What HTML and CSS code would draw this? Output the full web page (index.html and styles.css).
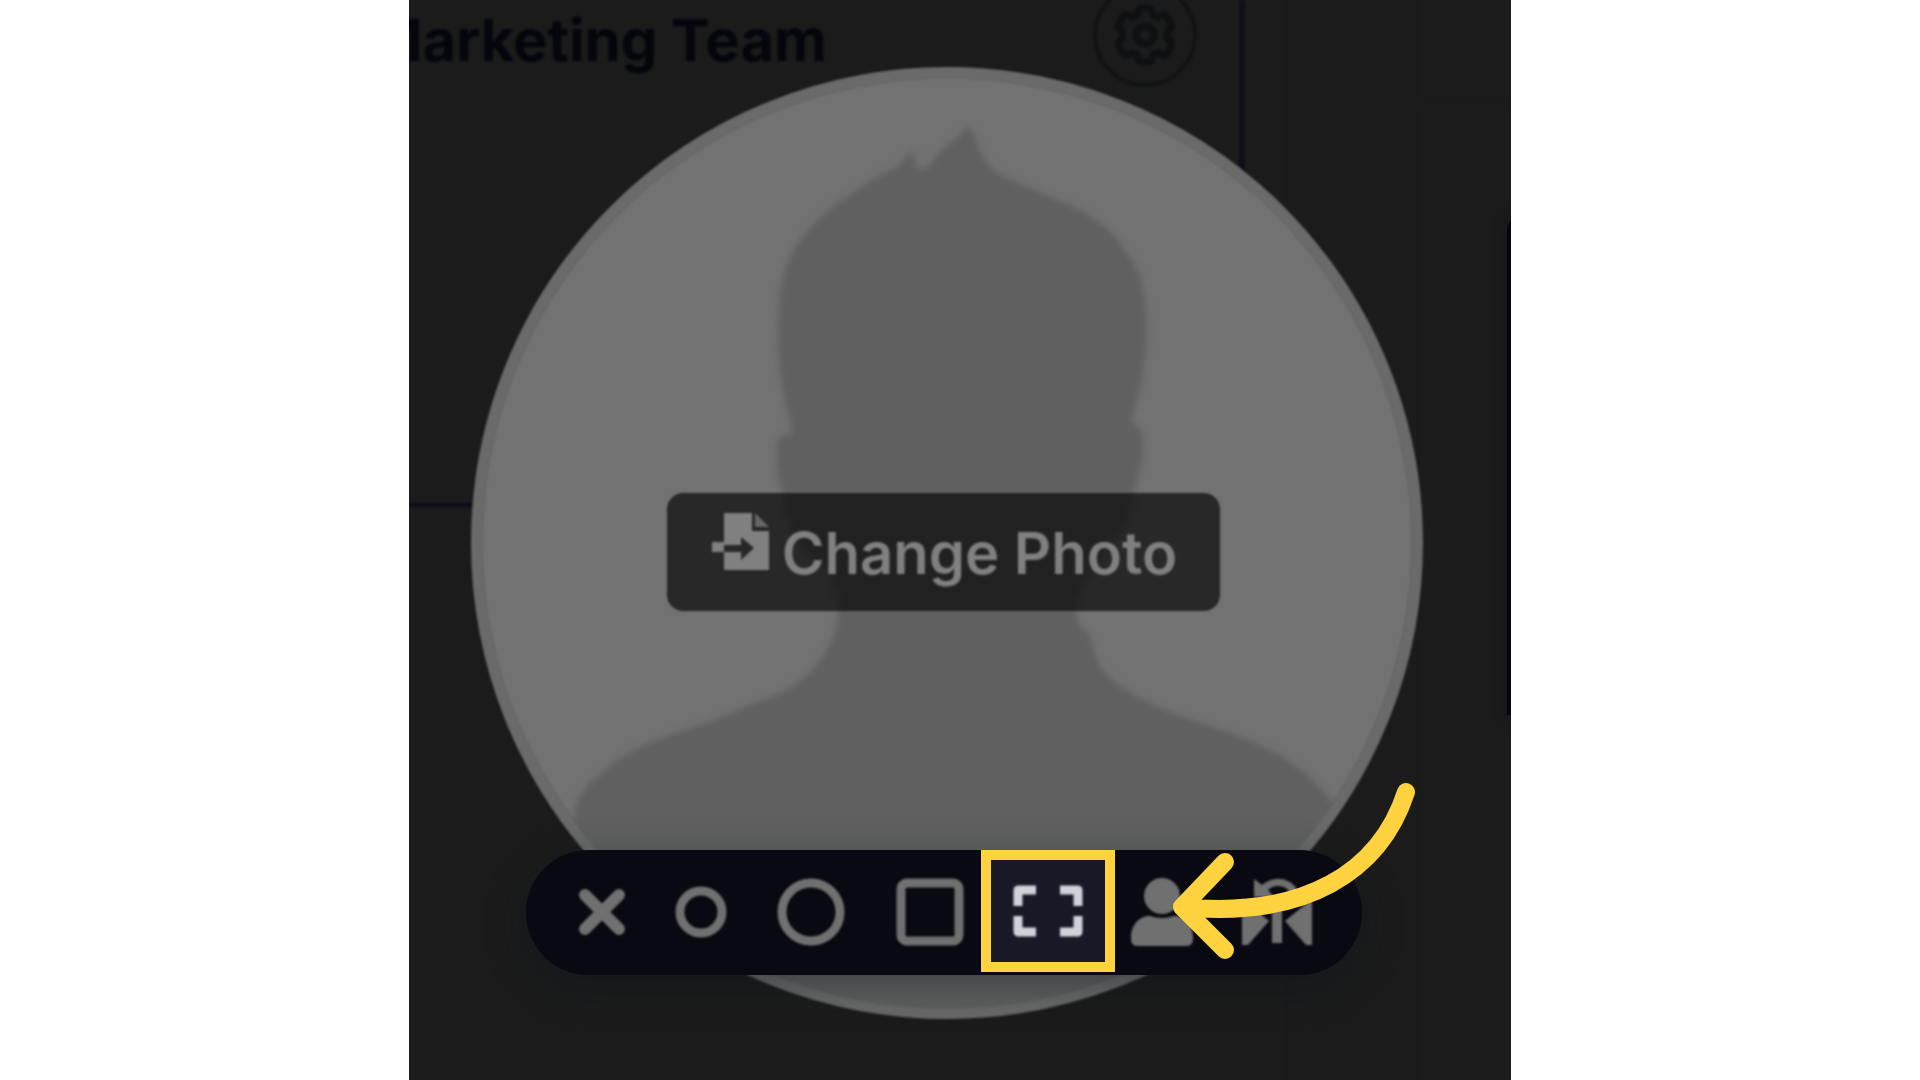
FILE: index.html
```html
<!DOCTYPE html>
<html lang="en">
<head>
<meta charset="utf-8">
<title>Marketing Team</title>
<link rel="stylesheet" href="styles.css">
</head>
<body>
<main class="stage">
  <div class="workspace">
    <section class="team">
      <header class="team-header">
        <h1 class="team-name">Marketing Team</h1>
        <button class="settings" type="button" aria-label="Team settings">
          <svg width="60" height="62" viewBox="0 0 60 62" fill="none" stroke="currentColor" stroke-width="7" stroke-linejoin="round" aria-hidden="true">
            <path d="M23 8Q24 4 27 4H33Q36 4 37 8Q38 13 43 13Q49 9 52 13L56 20Q58 23 54 26Q50 31 54 36Q58 39 56 42L52 49Q49 53 43 49Q38 49 37 54Q36 58 33 58H27Q24 58 23 54Q22 49 17 49Q11 53 8 49L4 42Q2 39 6 36Q10 31 6 26Q2 23 4 20L8 13Q11 9 17 13Q22 13 23 8Z"/>
            <circle cx="30" cy="31" r="9"/>
          </svg>
        </button>
      </header>
    </section>
    <div class="gutter"></div>
    <div class="gutter"></div>
    <aside class="side">
      <div class="side-header"></div>
      <div class="side-card"></div>
    </aside>
  </div>

  <div class="overlay">
    <div class="avatar">
      <svg class="portrait" viewBox="472 67 951 951" aria-hidden="true">
        <path d="M575 812C580 790 591 782 602 773C616 760 632 750 649 743C680 730 715 722 744 707C765 698 780 695 789 688C806 678 817 668 823 657C832 642 839 630 839 607C838 590 833 578 827 567C812 558 800 545 793 530C788 515 785 503 784 492C779 478 777 465 777 453C777 444 778 439 781 437C785 433 789 437 792 434C793 431 792 427 791 420C785 400 781 380 780 360Q778 335 780 313Q780 290 785 273C789 258 795 248 803 237C814 222 830 209 847 197C864 185 880 175 897 167Q907 157 915 151Q914 165 918 168Q923 170 928 167Q940 151 951 143Q961 136 967 126Q974 130 976 138Q979 150 984 157Q989 167 998 173C1012 180 1029 188 1047 195C1064 202 1080 209 1093 218C1108 227 1119 239 1127 253C1138 267 1142 280 1145 297Q1148 320 1147 340Q1145 365 1140 387Q1136 405 1132 420Q1132 425 1137 426Q1143 430 1143 440Q1144 455 1140 470Q1137 480 1134 495Q1131 525 1111 543Q1097 560 1084 583Q1076 595 1076 611Q1078 628 1086 631Q1090 633 1092 641C1095 652 1097 662 1102 668C1117 686 1138 697 1160 707C1190 720 1222 728 1250 740C1272 750 1290 760 1306 773Q1320 785 1334 804V1020H560Z"/>
      </svg>
    </div>
    <button class="change-photo" type="button">
      <svg width="60" height="58" viewBox="0 0 60 58" fill="currentColor" aria-hidden="true">
        <path fill-rule="evenodd" d="M14 0H42V18H59V57H14V39H31V47L44 35L31 24V32H14ZM2 29H14V39H2Z"/>
        <path d="M45 0L59 14H45Z" opacity=".7"/>
      </svg>
      <span>Change Photo</span>
    </button>
    <div class="toolbar" role="toolbar" aria-label="Camera size">
      <button class="tool" type="button" aria-label="Close">
        <svg width="48" height="48" viewBox="0 0 48 48" fill="none" stroke="currentColor" stroke-width="12" stroke-linecap="round" aria-hidden="true"><path d="M7 7L41 41M41 7L7 41"/></svg>
      </button>
      <button class="tool" type="button" aria-label="Small circle">
        <svg width="52" height="52" viewBox="0 0 52 52" fill="none" stroke="currentColor" stroke-width="9" aria-hidden="true"><circle cx="26" cy="26" r="21"/></svg>
      </button>
      <button class="tool" type="button" aria-label="Large circle">
        <svg width="70" height="70" viewBox="0 0 70 70" fill="none" stroke="currentColor" stroke-width="9" aria-hidden="true"><circle cx="35" cy="35" r="29"/></svg>
      </button>
      <button class="tool" type="button" aria-label="Square">
        <svg width="70" height="70" viewBox="0 0 70 70" fill="none" stroke="currentColor" stroke-width="9" aria-hidden="true"><rect x="6" y="6" width="58" height="58" rx="6"/></svg>
      </button>
      <button class="tool tool-active" type="button" aria-label="Full screen" aria-pressed="true">
        <svg width="72" height="54" viewBox="0 0 72 54" fill="none" stroke="currentColor" stroke-width="9" stroke-linejoin="round" aria-hidden="true"><path d="M6 22V6H24M48 6H66V22M66 32V48H48M24 48H6V32"/></svg>
      </button>
      <button class="tool" type="button" aria-label="Show avatar">
        <svg width="62" height="70" viewBox="0 0 62 70" fill="currentColor" aria-hidden="true"><circle cx="31" cy="19" r="18"/><path d="M0 61C0 47 9 39 19 39Q31 43 43 39C53 39 62 47 62 61Q62 69 56 69H6Q0 69 0 61Z"/></svg>
      </button>
      <button class="tool" type="button" aria-label="Flip camera">
        <svg width="70" height="70" viewBox="0 0 70 70" fill="currentColor" aria-hidden="true"><path d="M0 22L27 44L6 68H0ZM70 22L43 44L64 68H70ZM30 26H40V66H30ZM12 2L20 8Q34-3 48 5Q57 11 59 22L51 24Q48 9 36 9Q30 9 26 13L32 20H12Z"/></svg>
      </button>
    </div>
    <svg class="pointer" width="244" height="184" viewBox="1172 778 244 184" fill="none" stroke="currentColor" stroke-width="18" stroke-linecap="round" stroke-linejoin="round" aria-hidden="true">
      <path d="M1406 792C1380 872 1305 919 1182 907M1225 862L1182 907L1225 950"/>
    </svg>
  </div>
</main>
</body>
</html>
```
FILE: styles.css
```css
* {
  box-sizing: border-box;
}

body {
  margin: 0;
  background: #fff;
  font-family: Inter, "Open Sans", sans-serif;
}

button {
  padding: 0;
  border: 0;
  background: none;
  color: inherit;
  font: inherit;
  cursor: pointer;
}

svg {
  display: block;
  flex: none;
}

.stage {
  position: relative;
  width: 57.4%;
  height: 100vh;
  min-height: 1080px;
  margin: 0 auto;
  overflow: hidden;
  background: #1b1b1b;
}

/* Dimmed page behind the camera bubble */
.workspace {
  display: grid;
  grid-template-columns: minmax(0, 836fr) minmax(0, 44fr) minmax(0, 132fr) minmax(0, 90fr);
  height: 100%;
}

.team {
  height: 507px;
  border-right: 6px solid #0e0e18;
  border-bottom: 4px solid #0c0c18;
  filter: blur(1px);
}

.team-header {
  display: flex;
  align-items: flex-start;
  justify-content: flex-end;
  gap: 266px;
  padding-right: 42px;
  color: #05060c;
}

.team-name {
  margin: 8px 0 0;
  font-size: 58px;
  font-weight: 700;
  line-height: 64px;
  white-space: nowrap;
}

.settings {
  display: grid;
  flex: none;
  place-items: center;
  width: 104px;
  height: 104px;
  margin-top: -17px;
  border: 4px solid #121314;
  border-radius: 50%;
  color: #0f1012;
}

.gutter {
  border-right: 5px solid #191b1a;
}

.side-header {
  height: 105px;
  border-bottom: 4px solid #191b1a;
}

.side-card {
  height: 500px;
  margin: 110px -20px 0 86px;
  border-radius: 16px 0 0 0;
  background: #04050e;
  box-shadow: 0 0 14px #121516;
}

/* Camera bubble and its controls */
.overlay {
  position: absolute;
  inset: 0;
  display: grid;
  grid-template-rows: 67px 426px 118px 239px 125px;
  justify-items: center;
  padding-right: 26px;
}

.avatar {
  grid-area: 2 / 1 / 6 / 2;
  width: 952px;
  height: 952px;
  overflow: hidden;
  border: 10px solid #6a6a6a;
  border-radius: 50%;
  background: #727272;
  box-shadow: inset 0 0 0 2px #676767;
  filter: blur(1px);
}

.portrait {
  width: 952px;
  height: 952px;
  margin: -10px;
  fill: #606060;
  filter: blur(3px);
}

.change-photo {
  z-index: 1;
  grid-area: 3 / 1;
  display: flex;
  align-items: flex-start;
  gap: 12px;
  padding: 20px 43px;
  margin-right: 7px;
  border-radius: 16px;
  background: rgba(0, 0, 0, .65);
  color: #808080;
  font-size: 58px;
  font-weight: 600;
  line-height: 80px;
  white-space: nowrap;
  filter: blur(1px);
}

.toolbar {
  z-index: 1;
  grid-area: 5 / 1;
  display: flex;
  align-items: center;
  gap: 49px;
  height: 125px;
  padding: 0 50px 2px 52px;
  margin-right: 6px;
  border-radius: 63px;
  background: #090912;
  box-shadow: 0 12px 40px rgba(10, 20, 24, .4);
  color: #707070;
}

.tool {
  filter: blur(1px);
}

.tool-active {
  display: grid;
  place-items: center;
  align-self: flex-start;
  width: 134px;
  height: 122px;
  margin: 0 -33px;
  border: 10px solid #ffd23f;
  background: #191827;
  color: #d2d0da;
  filter: none;
}

.tool-active svg {
  filter: blur(1px);
}

.pointer {
  position: absolute;
  z-index: 2;
  top: 778px;
  left: calc(50% + 212px);
  color: #ffd23f;
}
```
